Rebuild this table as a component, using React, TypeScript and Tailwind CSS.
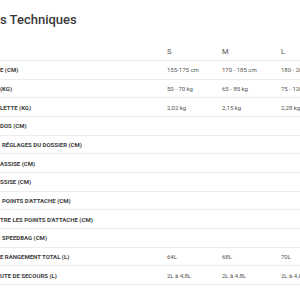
const rows: { label: string; pad: string; s?: string; m?: string; l?: string }[] = [
  { label: "E (CM)", pad: "pl-0", s: "155-175 cm", m: "170 - 185 cm", l: "180 - 200 cm" },
  { label: "(KG)", pad: "pl-0", s: "50 - 70 kg", m: "65 - 85 kg", l: "75 - 120 kg" },
  { label: "LETTE (KG)", pad: "pl-0", s: "2,02 kg", m: "2,15 kg", l: "2,28 kg" },
  { label: "DOS (CM)", pad: "pl-0" },
  { label: "RÉGLAGES DU DOSSIER (CM)", pad: "pl-[2px]" },
  { label: "ASSISE (CM)", pad: "pl-0" },
  { label: "SSISE (CM)", pad: "pl-0" },
  { label: "POINTS D'ATTACHE (CM)", pad: "pl-[2px]" },
  { label: "TRE LES POINTS D'ATTACHE (CM)", pad: "pl-0" },
  { label: "SPEEDBAG (CM)", pad: "pl-[2px]" },
  { label: "E RANGEMENT TOTAL (L)", pad: "pl-0", s: "64L", m: "68L", l: "70L" },
  { label: "UTE DE SECOURS (L)", pad: "pl-0", s: "2L à 4,8L", m: "2L à 4,8L", l: "2L à 4,8L" },
];

export default function App() {
  return (
    <div className="h-[300px] w-[300px] overflow-hidden bg-white font-['Roboto',sans-serif]">
      <h2 className="h-[43px] whitespace-nowrap pt-[11px] text-[13px] font-medium leading-[18px] text-[#3a3a3a]">
        s Techniques
      </h2>

      <div className="grid h-[18px] grid-cols-[167px_55px_59px_1fr] items-center border-b border-[#ececec] text-[7.5px] text-[#555]">
        <span />
        <span>S</span>
        <span>M</span>
        <span>L</span>
      </div>

      {rows.map((r) => (
        <div
          key={r.label}
          className="grid h-[18.67px] grid-cols-[167px_55px_59px_1fr] items-center whitespace-nowrap border-b border-[#ececec]"
        >
          <span className={`${r.pad} text-[6px] font-bold text-[#404040]`}>{r.label}</span>
          <span className="text-[6px] text-[#555]">{r.s}</span>
          <span className="text-[6px] text-[#555]">{r.m}</span>
          <span className="text-[6px] text-[#555]">{r.l}</span>
        </div>
      ))}
    </div>
  );
}
